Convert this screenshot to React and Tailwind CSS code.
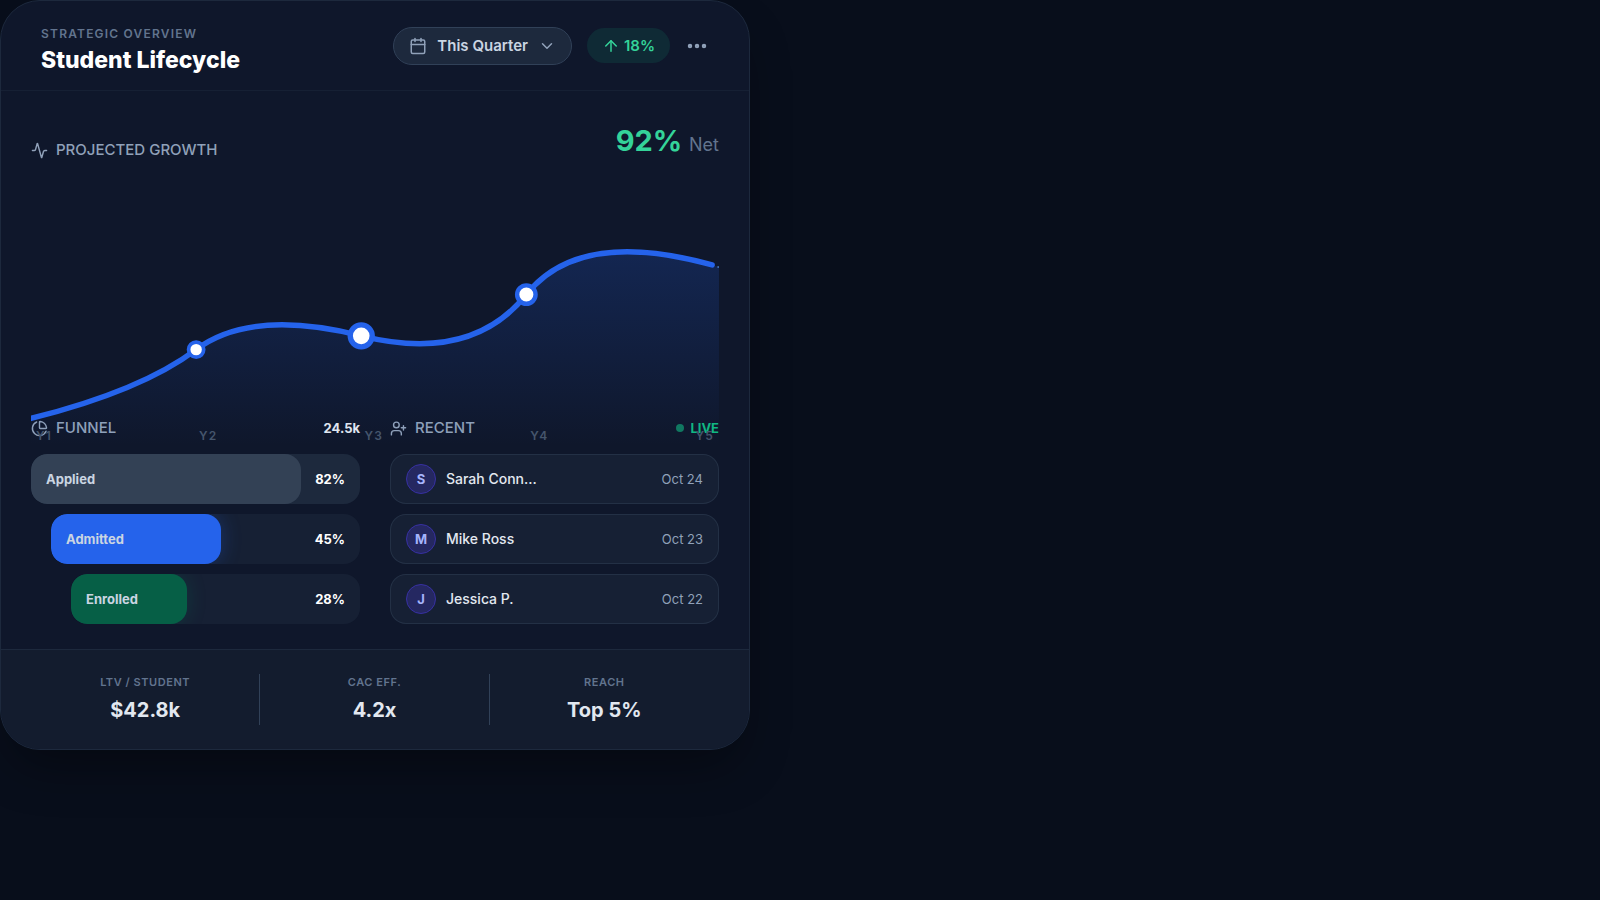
import React from 'react';
import { Activity, ArrowUp, Calendar, ChevronDown, MoreHorizontal, PieChart, UserPlus } from 'lucide-react';
import { clsx } from 'clsx';

const points = [
  { cx: 120, cy: 100, r: 5.5, stroke: 2.7 },
  { cx: 240, cy: 90, r: 8, stroke: 3.9 },
  { cx: 360, cy: 60, r: 6.7, stroke: 3.2 }
];

const years = ['Y1', 'Y2', 'Y3', 'Y4', 'Y5'];

// width is the drawn share of the track, value is the conversion rate
const funnel = [
  { label: 'Applied', value: 82, width: 82, indent: '', track: 'bg-slate-800', bar: 'bg-[#334155]' },
  { label: 'Admitted', value: 45, width: 55, indent: 'ml-5', track: 'bg-slate-800/50', bar: 'bg-[#2563eb] shadow-[0_0_20px_rgba(37,99,235,0.3)]' },
  { label: 'Enrolled', value: 28, width: 40, indent: 'ml-10', track: 'bg-slate-800/50', bar: 'bg-[#065f46] shadow-[0_0_20px_rgba(5,150,105,0.2)]' }
];

const recent = [
  { name: 'Sarah Conn…', date: 'Oct 24' },
  { name: 'Mike Ross', date: 'Oct 23' },
  { name: 'Jessica P.', date: 'Oct 22' }
];

const stats = [
  { label: 'LTV / Student', value: '$42.8k' },
  { label: 'CAC Eff.', value: '4.2x' },
  { label: 'Reach', value: 'Top 5%' }
];

const SectionTitle = ({ icon: Icon, children }) => (
  <h3 className="flex items-center gap-2 text-[15px] leading-5 font-medium uppercase text-slate-400">
    <Icon size={17} strokeWidth={2} />
    {children}
  </h3>
);

const Header = () => (
  <header className="flex h-[90px] items-center justify-between border-b border-slate-800/50 px-10">
    <div className="self-end pb-4">
      <p className="text-xs leading-4 font-semibold uppercase tracking-widest text-slate-500">Strategic Overview</p>
      <h2 className="mt-1 text-[23px] leading-7 font-extrabold text-white">Student Lifecycle</h2>
    </div>
    <div className="flex items-center">
      <button type="button" className="flex h-[38px] items-center gap-[10px] rounded-full border border-slate-700 bg-slate-800 px-[15px] text-[15px] leading-5 font-semibold text-slate-300">
        <Calendar size={18} className="text-slate-400" />
        This Quarter
        <ChevronDown size={18} className="text-slate-400" />
      </button>
      <span className="ml-[15px] flex h-[35px] items-center gap-1 rounded-full bg-[#10b981]/12 px-[15px] text-[15px] leading-5 font-semibold text-[#34d399]">
        <ArrowUp size={18} />
        18%
      </span>
      <button type="button" aria-label="More options" className="ml-[15px] text-slate-400">
        <MoreHorizontal size={24} strokeWidth={2.5} />
      </button>
    </div>
  </header>
);

const GrowthChart = () => (
  <div className="relative aspect-[10/3] min-h-0">
    <svg viewBox="0 0 500 170" className="block w-full" aria-hidden="true">
      <defs>
        <linearGradient id="growthFill" x1="0" y1="0" x2="0" y2="1">
          <stop offset="0%" stopColor="#2563eb" stopOpacity="0.2" />
          <stop offset="100%" stopColor="#2563eb" stopOpacity="0" />
        </linearGradient>
      </defs>
      <path d="M0,150 Q80,130 120,100 T240,90 T360,60 T500,40 V170 H0 Z" fill="url(#growthFill)" />
      <path d="M0,150 Q80,130 120,100 T240,90 T360,60 Q398.5,11.5 495,38.5" fill="none" stroke="#2563eb" strokeWidth="4" strokeLinecap="round" />
      <circle cx="499.4" cy="40" r="0.6" fill="#60a5fa" />
      {points.map((point) => (
        <circle key={point.cx} cx={point.cx} cy={point.cy} r={point.r} fill="#fff" stroke="#2563eb" strokeWidth={point.stroke} />
      ))}
    </svg>
    <div className="absolute inset-x-0 top-full mt-2 flex justify-between px-[5px] text-xs leading-5 font-semibold tracking-widest text-slate-600">
      {years.map((year) => (
        <span key={year}>{year}</span>
      ))}
    </div>
  </div>
);

const App = () => (
  <main className="min-h-screen bg-[#080e1b] font-['Inter',sans-serif]">
    <article className="w-full max-w-[750px] overflow-hidden rounded-[40px] border border-slate-800 bg-slate-900 shadow-2xl shadow-black/40">
      <Header />

      <section className="px-[30px] pt-8 pb-[25px]">
        <div className="flex items-end justify-between">
          <SectionTitle icon={Activity}>Projected Growth</SectionTitle>
          <p className="pb-px text-[29px] leading-9 font-bold text-[#34d399]">
            92% <span className="text-lg font-normal text-slate-500">Net</span>
          </p>
        </div>
        <div className="mt-[52px]">
          <GrowthChart />
        </div>

        <div className="grid grid-cols-2 gap-[30px]">
          <div>
            <div className="flex h-5 items-center justify-between">
              <SectionTitle icon={PieChart}>Funnel</SectionTitle>
              <span className="text-[13px] font-bold text-slate-200">24.5k</span>
            </div>
            <ul className="mt-4 grid gap-[10px]">
              {funnel.map(({ label, value, width, indent, track, bar }) => (
                <li key={label} className={clsx('relative flex h-[50px] items-center overflow-hidden rounded-2xl', indent, track)}>
                  <div className={clsx('flex h-full items-center rounded-2xl pl-[15px] text-[13px] font-bold text-slate-300', bar)} style={{ width: `${width}%` }}>
                    {label}
                  </div>
                  <span className="ml-auto pr-[15px] text-[13px] font-bold text-white">{value}%</span>
                </li>
              ))}
            </ul>
          </div>

          <div>
            <div className="flex h-5 items-center justify-between">
              <SectionTitle icon={UserPlus}>Recent</SectionTitle>
              <span className="flex items-center gap-[6px] text-[13px] font-bold text-[#10b981]">
                <i className="size-2 rounded-full bg-[#10b981]/60" />
                LIVE
              </span>
            </div>
            <ul className="mt-4 grid gap-[10px]">
              {recent.map(({ name, date }) => (
                <li key={name} className="flex h-[50px] items-center rounded-2xl border border-slate-700/50 bg-slate-800/50 px-[15px]">
                  <span className="flex size-[30px] items-center justify-center rounded-full border border-[#3730a3] bg-[#312e81]/60 text-[13px] font-bold text-[#a5b4fc]">
                    {name[0]}
                  </span>
                  <span className="ml-[10px] text-sm font-medium text-slate-200">{name}</span>
                  <time className="ml-auto text-[13px] text-slate-400">{date}</time>
                </li>
              ))}
            </ul>
          </div>
        </div>
      </section>

      <footer className="border-t border-slate-800 bg-[#131c2e] px-[30px] py-6">
        <dl className="grid grid-cols-3 divide-x divide-slate-700">
          {stats.map(({ label, value }) => (
            <div key={label} className="pb-px text-center">
              <dt className="text-[11px] leading-4 font-semibold uppercase tracking-wider text-slate-500">{label}</dt>
              <dd className="mt-[6px] text-xl leading-7 font-bold text-slate-200">{value}</dd>
            </div>
          ))}
        </dl>
      </footer>
    </article>
  </main>
);

export default App;
